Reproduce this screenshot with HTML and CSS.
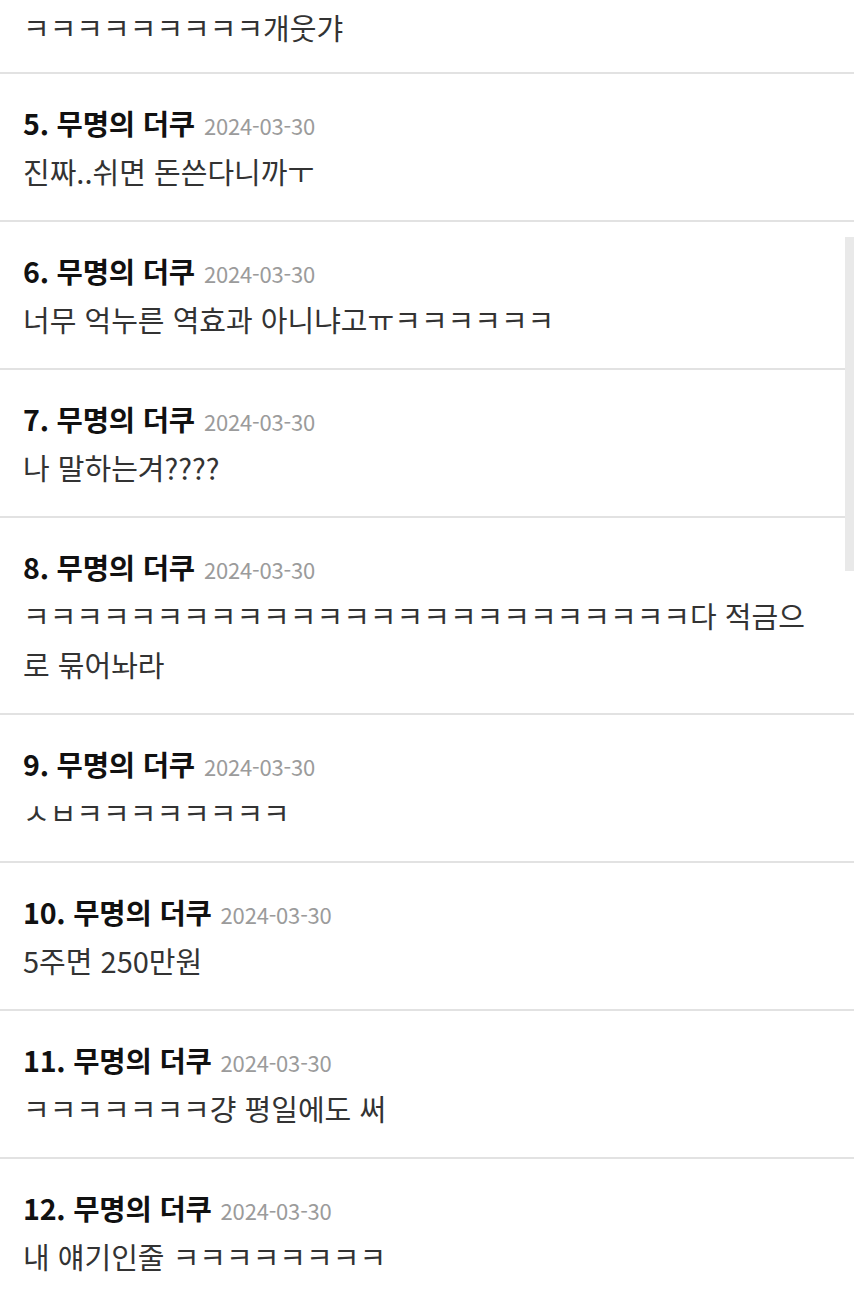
FILE: index.html
```html
<!DOCTYPE html>
<html lang="ko">
<head>
<meta charset="utf-8">
<title>댓글</title>
<link rel="stylesheet" href="styles.css">
</head>
<body>
<div class="page">
  <ul class="comments">
    <li class="comment partial">
      <p class="body">ㅋㅋㅋㅋㅋㅋㅋㅋㅋ개웃갸</p>
    </li>
    <li class="comment">
      <div class="head"><span class="name">5. 무명의 더쿠</span><span class="date">2024-03-30</span></div>
      <p class="body">진짜..쉬면 돈쓴다니까ㅜ</p>
    </li>
    <li class="comment">
      <div class="head"><span class="name">6. 무명의 더쿠</span><span class="date">2024-03-30</span></div>
      <p class="body">너무 억누른 역효과 아니냐고ㅠㅋㅋㅋㅋㅋㅋ</p>
    </li>
    <li class="comment">
      <div class="head"><span class="name">7. 무명의 더쿠</span><span class="date">2024-03-30</span></div>
      <p class="body">나 말하는겨????</p>
    </li>
    <li class="comment">
      <div class="head"><span class="name">8. 무명의 더쿠</span><span class="date">2024-03-30</span></div>
      <p class="body">ㅋㅋㅋㅋㅋㅋㅋㅋㅋㅋㅋㅋㅋㅋㅋㅋㅋㅋㅋㅋㅋㅋㅋㅋㅋ다 적금으로 묶어놔라</p>
    </li>
    <li class="comment">
      <div class="head"><span class="name">9. 무명의 더쿠</span><span class="date">2024-03-30</span></div>
      <p class="body">ㅅㅂㅋㅋㅋㅋㅋㅋㅋㅋ</p>
    </li>
    <li class="comment">
      <div class="head"><span class="name">10. 무명의 더쿠</span><span class="date">2024-03-30</span></div>
      <p class="body">5주면 250만원</p>
    </li>
    <li class="comment">
      <div class="head"><span class="name">11. 무명의 더쿠</span><span class="date">2024-03-30</span></div>
      <p class="body">ㅋㅋㅋㅋㅋㅋㅋ걍 평일에도 써</p>
    </li>
    <li class="comment">
      <div class="head"><span class="name">12. 무명의 더쿠</span><span class="date">2024-03-30</span></div>
      <p class="body">내 얘기인줄 ㅋㅋㅋㅋㅋㅋㅋㅋ</p>
    </li>
  </ul>
  <div class="scrollbar"></div>
</div>
</body>
</html>
```
FILE: styles.css
```css
html, body {
  margin: 0;
  padding: 0;
  background: #ffffff;
}
body {
  font-family: "Noto Sans CJK KR", "Noto Sans", sans-serif;
  overflow: hidden;
}
.page {
  position: relative;
  width: 854px;
  height: 1297px;
  overflow: hidden;
}
.comments {
  list-style: none;
  margin: 0;
  padding: 0;
}
.comment {
  padding: 24px 30px 24px 23px;
  border-bottom: 2px solid #e2e2e2;
}
.comment.partial {
  padding-top: 3px;
  padding-bottom: 20px;
}
.head {
  display: flex;
  align-items: baseline;
  gap: 9px;
  height: 49px;
  line-height: 49px;
}
.name {
  font-size: 28.6px;
  font-weight: 700;
  color: #111111;
  letter-spacing: -0.2px;
}
.date {
  font-size: 22px;
  color: #9b9b9b;
  letter-spacing: -0.2px;
}
.body {
  margin: 0;
  font-size: 29px;
  line-height: 49px;
  color: #333333;
}
.scrollbar {
  position: absolute;
  top: 237px;
  right: 0;
  width: 9px;
  height: 334px;
  background: #e9e9e9;
}
```
